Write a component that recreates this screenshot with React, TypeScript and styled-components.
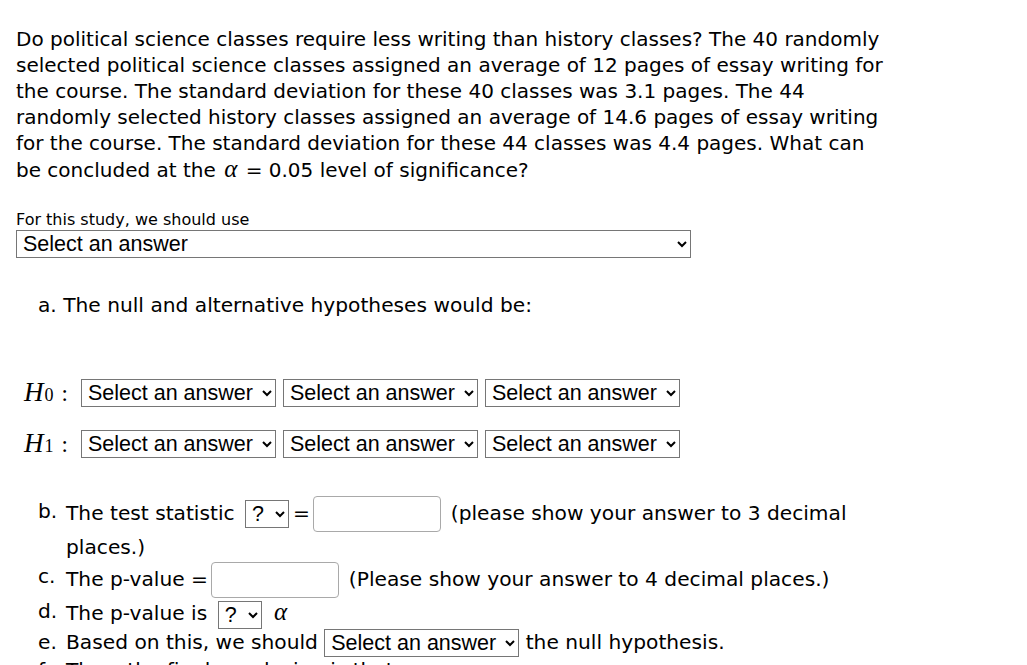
import React from 'react';
import styled, { createGlobalStyle } from 'styled-components';

// === STYLES ===

const GlobalStyle = createGlobalStyle`
  html, body {
    margin: 0;
    padding: 0;
    background: #ffffff;
  }
  body {
    font-family: "DejaVu Sans", Verdana, sans-serif;
    color: #000;
  }
`;

const Page = styled.div`
  width: 876px;
  padding: 26px 0 0 16px;
`;

const Question = styled.p`
  margin: 0;
  font-size: 20px;
  line-height: 26px;
`;

const Alpha = styled.span`
  font-family: "Liberation Serif", serif;
  font-style: italic;
  font-size: 25px;
  margin: 0 2px;
`;

const Label = styled.div`
  margin-top: 27px;
  font-size: 16px;
  line-height: 20px;
`;

const Select = styled.select<{ $width: number }>`
  width: ${p => p.$width}px;
  height: 28px;
  font-family: "Liberation Sans", Arial, sans-serif;
  font-size: 21.5px;
  color: #000;
  background: #fff;
  border: 1px solid #767676;
  border-radius: 0;
  padding: 0 2px;
  vertical-align: middle;
`;

const Part = styled.div`
  margin: 34px 0 0 22px;
  font-size: 20.2px;
  line-height: 26px;
`;

const Hypotheses = styled.div`
  margin-top: 59px;
  display: flex;
  flex-direction: column;
  gap: 20px;
  padding-left: 8px;
`;

const HypRow = styled.div`
  display: flex;
  align-items: center;
  gap: 7px;
`;

const MathLabel = styled.span`
  font-family: "Liberation Serif", serif;
  font-size: 27px;
  width: 50px;
  display: inline-flex;
  align-items: baseline;

  i {
    font-style: italic;
  }
  sub {
    font-size: 18px;
    vertical-align: -4px;
    margin-left: 1px;
  }
  b {
    font-weight: normal;
    margin-left: 8px;
    font-size: 23px;
  }
`;

const Parts = styled.ol`
  list-style: none;
  margin: 37px 0 0 0;
  padding: 0 0 0 22px;
  font-size: 20.2px;
`;

const Item = styled.li<{ $lh: number }>`
  display: grid;
  grid-template-columns: 28px 1fr;
  line-height: ${p => p.$lh}px;
`;

const Marker = styled.span``;

const Body = styled.span``;

const TextInput = styled.input`
  width: 128px;
  height: 36px;
  box-sizing: border-box;
  border: 1px solid #a9a9a9;
  border-radius: 4px;
  vertical-align: middle;
  margin: 0 3px 0 -3px;
  font-size: 18px;
`;

const SmallSelect = styled(Select)`
  margin: 0 4px;
`;

// === DONNÉES ===

const answer = 'Select an answer';

// === COMPOSANT ===

function Choice({ width }: { width: number }) {
  return (
    <Select $width={width} defaultValue="">
      <option value="">{answer}</option>
    </Select>
  );
}

function Mini({ width }: { width: number }) {
  return (
    <SmallSelect $width={width} defaultValue="">
      <option value="">?</option>
    </SmallSelect>
  );
}

export default function App() {
  return (
    <>
      <GlobalStyle />
      <Page>
        <Question>
          Do political science classes require less writing than history classes? The 40 randomly
          selected political science classes assigned an average of 12 pages of essay writing for
          the course. The standard deviation for these 40 classes was 3.1 pages. The 44 randomly
          selected history classes assigned an average of 14.6 pages of essay writing for the
          course. The standard deviation for these 44 classes was 4.4 pages. What can be concluded
          at the <Alpha>α</Alpha> = 0.05 level of significance?
        </Question>

        <Label>For this study, we should use</Label>
        <Choice width={675} />

        <Part>a. The null and alternative hypotheses would be:</Part>

        <Hypotheses>
          {['0', '1'].map(n => (
            <HypRow key={n}>
              <MathLabel>
                <i>H</i>
                <sub>{n}</sub>
                <b>:</b>
              </MathLabel>
              <Choice width={195} />
              <Choice width={195} />
              <Choice width={195} />
            </HypRow>
          ))}
        </Hypotheses>

        <Parts>
          <Item $lh={30}>
            <Marker>b.</Marker>
            <Body>
              The test statistic <Mini width={44} />= <TextInput type="text" /> (please show your
              answer to 3 decimal places.)
            </Body>
          </Item>
          <Item $lh={29}>
            <Marker>c.</Marker>
            <Body>
              The p-value = <TextInput type="text" /> (Please show your answer to 4 decimal places.)
            </Body>
          </Item>
          <Item $lh={27}>
            <Marker>d.</Marker>
            <Body>
              The p-value is <Mini width={44} /> <Alpha>α</Alpha>
            </Body>
          </Item>
          <Item $lh={27}>
            <Marker>e.</Marker>
            <Body>
              Based on this, we should <Choice width={195} /> the null hypothesis.
            </Body>
          </Item>
          <Item $lh={27}>
            <Marker>f.</Marker>
            <Body>Thus, the final conclusion is that ...</Body>
          </Item>
        </Parts>
      </Page>
    </>
  );
}
